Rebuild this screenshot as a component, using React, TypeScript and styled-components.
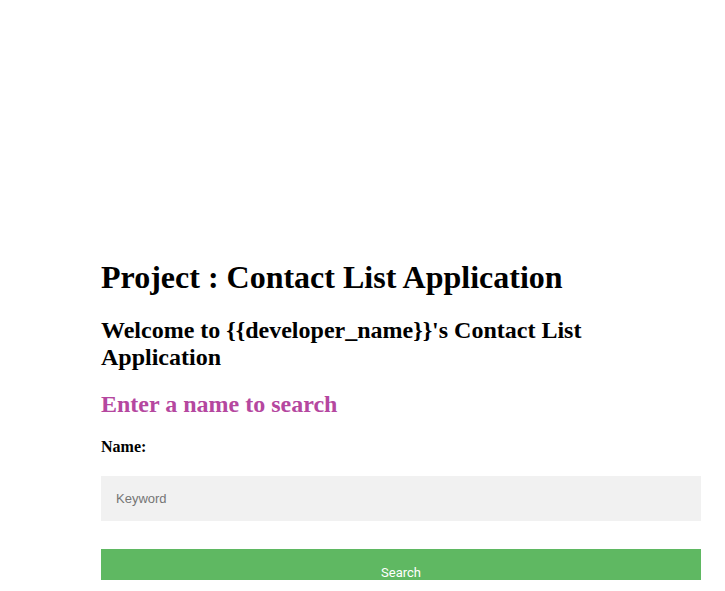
import React from "react";
import styled, { createGlobalStyle } from "styled-components";

const Global = createGlobalStyle`
  html, body { margin: 0; padding: 0; background: #ffffff; }
  body { font-family: "Liberation Serif", "Times New Roman", serif; color: #000; }
`;

const Page = styled.div`
  width: 725px;
  height: 591px;
  overflow: hidden;
  box-sizing: border-box;
  padding: 238px 24px 0 101px;
`;

const Title = styled.h1`
  font-size: 32px;
  font-weight: bold;
  margin: 21px 0;
`;

const Welcome = styled.h2`
  font-size: 24px;
  font-weight: bold;
  margin: 20px 0;
  width: 600px;
`;

const SearchHeading = styled.h2`
  font-size: 24px;
  font-weight: bold;
  color: #b5479f;
  margin: 20px 0;
`;

const Form = styled.form`
  display: flex;
  flex-direction: column;
  width: 600px;
`;

const Label = styled.label`
  font-size: 16px;
  font-weight: bold;
  margin-bottom: 20px;
`;

const Input = styled.input`
  box-sizing: border-box;
  width: 600px;
  height: 45px;
  border: none;
  outline: none;
  background: #f1f1f1;
  padding: 0 15px;
  font-family: "Liberation Sans", Arial, sans-serif;
  font-size: 13px;
  color: #333;
  margin-bottom: 28px;
  &::placeholder { color: #757575; }
`;

const Button = styled.button`
  box-sizing: border-box;
  width: 600px;
  height: 31px;
  border: none;
  background: #5fb862;
  color: #ffffff;
  font-family: Roboto, "Liberation Sans", sans-serif;
  font-size: 13px;
  display: flex;
  align-items: flex-end;
  justify-content: center;
  padding: 0;
`;

export default function App() {
  return (
    <Page>
      <Global />
      <Title>Project : Contact List Application</Title>
      <Welcome>Welcome to {"{{developer_name}}"}'s Contact List Application</Welcome>
      <SearchHeading>Enter a name to search</SearchHeading>
      <Form onSubmit={(e) => e.preventDefault()}>
        <Label htmlFor="name">Name:</Label>
        <Input id="name" placeholder="Keyword" />
        <Button type="submit">Search</Button>
      </Form>
    </Page>
  );
}
